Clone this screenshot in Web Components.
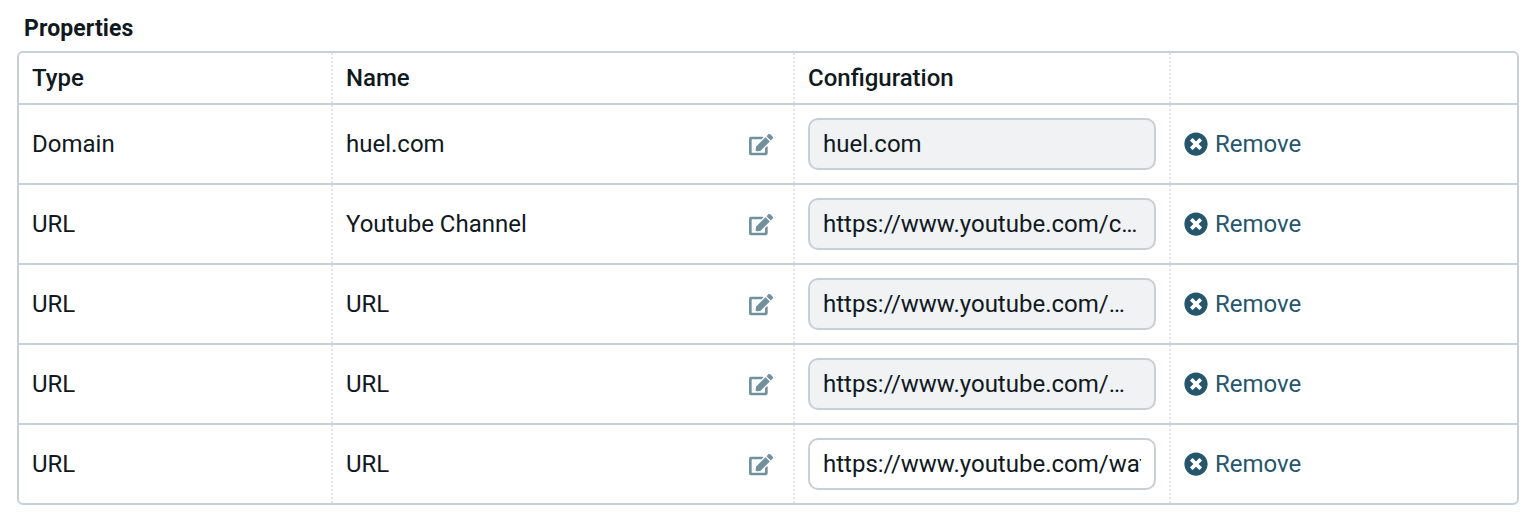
<!DOCTYPE html>
<html lang="en">
<head>
<meta charset="utf-8">
<title>Properties</title>
<style>
html, body { margin: 0; background: #fff; }
body { font-family: Roboto, sans-serif; font-size: 24px; color: #10191e; }
</style>
</head>
<body>
<properties-panel></properties-panel>
<script>
class PropertiesPanel extends HTMLElement {
  connectedCallback() {
    const rows = [
      ['Domain', 'huel.com', 'huel.com', true],
      ['URL', 'Youtube Channel', 'https://www.youtube.com/c…', true],
      ['URL', 'URL', 'https://www.youtube.com/…', true],
      ['URL', 'URL', 'https://www.youtube.com/…', true],
      ['URL', 'URL', 'https://www.youtube.com/wat', false]
    ];
    this.attachShadow({ mode: 'open' }).innerHTML = `
      <style>
        :host { display: block; box-sizing: border-box; height: 528px; padding: 9px 17px 0; overflow: hidden; }
        h2 { margin: 0; padding: 0 7px; height: 42px; line-height: 40px; font-size: 23px; font-weight: 700; letter-spacing: 0.12px; }
        .table { border: 2px solid #c5d1d6; border-radius: 6px; }
        property-row + property-row { border-top: 2px solid #c5d1d6; }
      </style>
      <h2>Properties</h2>
      <div class="table">
        <property-row head>
          <span slot="type">Type</span><span slot="name">Name</span><span slot="config">Configuration</span>
        </property-row>
        ${rows.map(([t, n, c, ro]) => `
        <property-row>
          <span slot="type">${t}</span>
          <span slot="name">${n}</span>
          <edit-icon slot="edit"></edit-icon>
          <config-field slot="config" ${ro ? 'readonly' : ''}>${c}</config-field>
          <remove-button slot="action">Remove</remove-button>
        </property-row>`).join('')}
      </div>`;
  }
}
class PropertyRow extends HTMLElement {
  connectedCallback() {
    this.attachShadow({ mode: 'open' }).innerHTML = `
      <style>
        :host { display: grid; grid-template-columns: 314px 462px 376px 1fr; height: 78px; font-size: 24px; }
        :host([head]) { height: 50px; font-weight: 500; }
        .cell { display: flex; align-items: center; justify-content: space-between; box-sizing: border-box; min-width: 0; padding: 0 20px 0 13px; border-right: 2px dotted #e0e6e9; }
        .cell:first-child { padding-left: 13.5px; }
        .cell:last-child { border-right: 0; }
        .config { padding-right: 12px; }
      </style>
      <div class="cell"><slot name="type"></slot></div>
      <div class="cell"><slot name="name"></slot><slot name="edit"></slot></div>
      <div class="cell config"><slot name="config"></slot></div>
      <div class="cell"><slot name="action"></slot></div>`;
  }
}
class ConfigField extends HTMLElement {
  connectedCallback() {
    this.attachShadow({ mode: 'open' }).innerHTML = `
      <style>
        :host { display: block; box-sizing: border-box; width: 348px; height: 52px; flex: none; border: 2px solid #c5d1d6; border-radius: 10px; padding: 0 13px; background: #fff; color: #10191e; }
        :host([readonly]) { background: #f0f2f4; }
        div { overflow: hidden; white-space: nowrap; line-height: 48px; }
      </style>
      <div><slot></slot></div>`;
  }
}
class EditIcon extends HTMLElement {
  connectedCallback() {
    this.attachShadow({ mode: 'open' }).innerHTML = `
      <style>:host { display: block; color: #70909e; padding-top: 2px; } svg { display: block; }</style>
      <svg width="24" height="21.33" viewBox="0 0 576 512" fill="currentColor" aria-hidden="true"><path d="M402.600 83.200l90.200 90.200c3.800 3.800 3.800 10 0 13.800L274.400 405.600l-92.800 10.300c-12.400 1.400-22.900-9.100-21.500-21.500l10.300-92.800L388.800 83.200c3.800-3.800 10-3.800 13.800 0zm162-22.900l-48.800-48.800c-15.200-15.200-39.900-15.200-55.200 0l-35.400 35.400c-3.800 3.800-3.800 10 0 13.800l90.200 90.200c3.800 3.800 10 3.800 13.800 0l35.400-35.400c15.200-15.300 15.200-40 0-55.200zM384 346.200V448H64V128h229.800c3.200 0 6.200-1.300 8.500-3.500l40-40c7.600-7.600 2.200-20.500-8.500-20.500H48C21.500 64 0 85.500 0 112v352c0 26.500 21.500 48 48 48h352c26.500 0 48-21.500 48-48V306.200c0-10.700-12.900-16-20.500-8.500l-40 40c-2.200 2.300-3.500 5.300-3.500 8.500z"/></svg>`;
  }
}
class RemoveButton extends HTMLElement {
  connectedCallback() {
    this.attachShadow({ mode: 'open' }).innerHTML = `
      <style>:host { display: flex; align-items: center; gap: 7px; color: #25566c; } svg { display: block; }</style>
      <svg width="24" height="24" viewBox="0 0 512 512" fill="currentColor" aria-hidden="true"><path d="M256 8C119 8 8 119 8 256s111 248 248 248 248-111 248-248S393 8 256 8zm121.600 313.100c4.700 4.700 4.700 12.300 0 17L338 377.600c-4.700 4.700-12.300 4.700-17 0L256 312l-65.100 65.600c-4.700 4.700-12.300 4.700-17 0L134.400 338c-4.700-4.700-4.700-12.300 0-17l65.600-65-65.600-65.100c-4.700-4.700-4.700-12.300 0-17l39.600-39.600c4.700-4.700 12.300-4.700 17 0l65 65.700 65.100-65.600c4.700-4.700 12.300-4.700 17 0l39.600 39.600c4.700 4.700 4.700 12.300 0 17L312 256l65.600 65.100z"/></svg>
      <slot></slot>`;
  }
}
customElements.define('edit-icon', EditIcon);
customElements.define('remove-button', RemoveButton);
customElements.define('config-field', ConfigField);
customElements.define('property-row', PropertyRow);
customElements.define('properties-panel', PropertiesPanel);
</script>
</body>
</html>
